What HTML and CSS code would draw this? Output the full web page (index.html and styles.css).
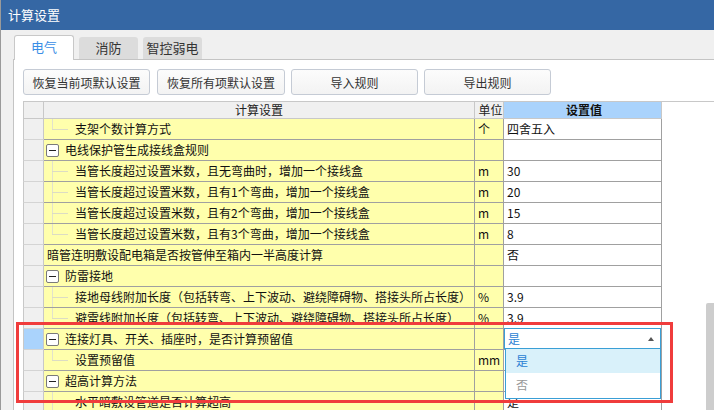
FILE: index.html
```html
<!DOCTYPE html>
<html lang="zh">
<head>
<meta charset="utf-8">
<title>计算设置</title>
<link rel="stylesheet" href="styles.css">
</head>
<body>
<div class="window">
  <div class="titlebar">计算设置</div>
  <div class="body">
    <div class="tabs">
      <div class="tab active">电气</div>
      <div class="tab">消防</div>
      <div class="tab">智控弱电</div>
    </div>
    <div class="panel">
      <div class="toolbar">
        <button class="btn w127">恢复当前项默认设置</button>
        <button class="btn w128">恢复所有项默认设置</button>
        <button class="btn w127">导入规则</button>
        <button class="btn w127">导出规则</button>
      </div>
      <div class="grid-wrap">
        <div class="grid">
          <div class="row head">
            <div class="c rh"></div>
            <div class="c name hc">计算设置</div>
            <div class="c unit hc">单位</div>
            <div class="c val hv">设置值</div>
          </div>

          <div class="row">
            <div class="c rh"></div>
            <div class="c name child last">支架个数计算方式</div>
            <div class="c unit">个</div>
            <div class="c val">四舍五入</div>
          </div>
          <div class="row">
            <div class="c rh"></div>
            <div class="c name parent"><span class="box"></span>电线保护管生成接线盒规则</div>
            <div class="c unit"></div>
            <div class="c val"></div>
          </div>
          <div class="row">
            <div class="c rh"></div>
            <div class="c name child">当管长度超过设置米数，且无弯曲时，增加一个接线盒</div>
            <div class="c unit">m</div>
            <div class="c val">30</div>
          </div>
          <div class="row">
            <div class="c rh"></div>
            <div class="c name child">当管长度超过设置米数，且有1个弯曲，增加一个接线盒</div>
            <div class="c unit">m</div>
            <div class="c val">20</div>
          </div>
          <div class="row">
            <div class="c rh"></div>
            <div class="c name child">当管长度超过设置米数，且有2个弯曲，增加一个接线盒</div>
            <div class="c unit">m</div>
            <div class="c val">15</div>
          </div>
          <div class="row">
            <div class="c rh"></div>
            <div class="c name child last">当管长度超过设置米数，且有3个弯曲，增加一个接线盒</div>
            <div class="c unit">m</div>
            <div class="c val">8</div>
          </div>
          <div class="row">
            <div class="c rh"></div>
            <div class="c name top">暗管连明敷设配电箱是否按管伸至箱内一半高度计算</div>
            <div class="c unit"></div>
            <div class="c val">否</div>
          </div>
          <div class="row">
            <div class="c rh"></div>
            <div class="c name parent"><span class="box"></span>防雷接地</div>
            <div class="c unit"></div>
            <div class="c val"></div>
          </div>
          <div class="row">
            <div class="c rh"></div>
            <div class="c name child">接地母线附加长度（包括转弯、上下波动、避绕障碍物、搭接头所占长度）</div>
            <div class="c unit">%</div>
            <div class="c val">3.9</div>
          </div>
          <div class="row">
            <div class="c rh"></div>
            <div class="c name child last">避雷线附加长度（包括转弯、上下波动、避绕障碍物、搭接头所占长度）</div>
            <div class="c unit">%</div>
            <div class="c val">3.9</div>
          </div>
          <div class="row">
            <div class="c rh sel"></div>
            <div class="c name parent"><span class="box"></span>连接灯具、开关、插座时，是否计算预留值</div>
            <div class="c unit"></div>
            <div class="c val edit">
              <div class="combo">
                <span class="combo-text">是</span>
                <span class="combo-arrow"></span>
              </div>
              <div class="droplist">
                <div class="opt hover">是</div>
                <div class="opt off">否</div>
              </div>
            </div>
          </div>
          <div class="row">
            <div class="c rh"></div>
            <div class="c name child last">设置预留值</div>
            <div class="c unit">mm</div>
            <div class="c val"></div>
          </div>
          <div class="row">
            <div class="c rh"></div>
            <div class="c name parent"><span class="box"></span>超高计算方法</div>
            <div class="c unit"></div>
            <div class="c val"></div>
          </div>
          <div class="row">
            <div class="c rh"></div>
            <div class="c name child">水平暗敷设管道是否计算超高</div>
            <div class="c unit"></div>
            <div class="c val">是</div>
          </div>
        </div>
      </div>
    </div>
  </div>
  <div class="scroll-thumb"></div>
  <div class="highlight"></div>
</div>
</body>
</html>
```

FILE: styles.css
```css
* { box-sizing: border-box; }
html, body {
  margin: 0;
  padding: 0;
  width: 714px;
  height: 410px;
  overflow: hidden;
}
body {
  font-family: "Noto Sans CJK SC", "Microsoft YaHei", sans-serif;
  font-size: 12px;
  color: #111;
  background: #f0f0f0;
}
.window {
  position: relative;
  width: 714px;
  height: 410px;
  overflow: hidden;
  border-left: 1px solid #9a9a9a;
}
.titlebar {
  height: 30px;
  background: #3567a4;
  color: #fff;
  font-size: 13px;
  line-height: 30px;
  padding-left: 7px;
}
.body {
  padding-top: 5px;
}
.tabs {
  display: flex;
  align-items: flex-end;
  gap: 5px;
  padding-left: 13px;
  height: 24px;
  position: relative;
  z-index: 2;
}
.tab {
  width: 59px;
  height: 22px;
  background: #dcdcdc;
  color: #333;
  font-size: 13px;
  line-height: 22px;
  text-align: center;
  border-radius: 3px 3px 0 0;
}
.tab.active {
  width: 60px;
  height: 25px;
  margin-bottom: -1px;
  background: #fff;
  color: #3a8ee6;
  border: 1px solid #c8c8c8;
  border-bottom: none;
  line-height: 22px;
}
.panel {
  margin-left: 12px;
  background: #fff;
  border-top: 1px solid #c4c4c4;
  border-left: 1px solid #c4c4c4;
  height: 360px;
  padding-left: 9px;
  padding-top: 9px;
}
.toolbar {
  display: flex;
  gap: 6px;
  height: 26px;
}
.btn {
  height: 26px;
  padding: 0;
  border: 1px solid #c5cbd5;
  border-radius: 3px;
  background: linear-gradient(#fcfcfc, #f3f3f3);
  font-family: inherit;
  font-size: 12px;
  color: #333;
}
.w127 { width: 127px; }
.w128 { width: 128px; }
.btn:nth-child(2) { margin-left: 1px; }
.grid-wrap {
  margin-top: 6px;
  border-top: 1px solid #c8c8c8;
}
.grid {
  display: flex;
  flex-direction: column;
  width: 639px;
}
.row {
  display: grid;
  grid-template-columns: 21px 431px 29px 158px;
  height: 21px;
}
.row.head { height: 17px; }
.c {
  border-right: 1px solid #a0a0a0;
  border-bottom: 1px solid #a0a0a0;
  height: 100%;
  line-height: 20px;
  white-space: nowrap;
  overflow: hidden;
  position: relative;
}
.head .c { line-height: 16px; background: #f0f0f0; border-color: #c8c8c8; }
.head .hc { text-align: center; color: #222; }
.head .hv {
  background: #aad3fc;
  text-align: center;
  font-weight: bold;
  color: #111;
  border-color: #c8c8c8;
}
.rh {
  background: #f0f0f0;
  border-left: 1px solid #c8c8c8;
  border-right-color: #c8c8c8;
  border-bottom-color: #d4d4d4;
}
.rh.sel { background: #aad3fc; }
.name, .unit { background: #ffffac; }
.unit { padding-left: 3px; }
.val { background: #fff; padding-left: 3px; overflow: visible; }
.top { padding-left: 3px; }
.parent {
  display: flex;
  align-items: center;
  padding-left: 2px;
}
.box {
  width: 13px;
  height: 13px;
  border: 1px solid #7a7a7a;
  border-radius: 2px;
  background: #fff;
  margin-right: 6px;
  position: relative;
  flex: none;
}
.box::after {
  content: "";
  position: absolute;
  left: 2px;
  right: 2px;
  top: 5px;
  height: 1px;
  background: #222;
}
.child { padding-left: 31px; }
.child::before {
  content: "";
  position: absolute;
  left: 8px;
  top: 0;
  height: 100%;
  border-left: 1px solid #e2e2cc;
}
.child.last::before { height: 10px; }
.child::after {
  content: "";
  position: absolute;
  left: 8px;
  top: 10px;
  width: 16px;
  border-top: 1px solid #dcdcc4;
}
.edit { padding: 0; z-index: 5; }
.combo {
  position: absolute;
  left: 0;
  top: -1px;
  width: 157px;
  height: 21px;
  border: 1px solid #3a9fd6;
  background: #fff;
  display: flex;
  align-items: center;
  padding-left: 3px;
  color: #2a7fd4;
}
.combo-arrow {
  position: absolute;
  right: 6px;
  top: 8px;
  width: 0;
  height: 0;
  border-left: 3px solid transparent;
  border-right: 3px solid transparent;
  border-bottom: 4px solid #555;
}
.droplist {
  position: absolute;
  left: 1px;
  top: 20px;
  width: 156px;
  height: 50px;
  border: 1px solid #3a9fd6;
  border-top: none;
  background: #fff;
}
.opt {
  height: 24px;
  line-height: 24px;
  padding-left: 10px;
  font-size: 12px;
}
.opt.hover { background: #d9f1fa; color: #2a7fd4; }
.opt.off { color: #999; }
.scroll-thumb {
  position: absolute;
  left: 705px;
  top: 303px;
  width: 9px;
  height: 120px;
  background: #cdcdcd;
  border-radius: 2px 0 0 0;
}
.highlight {
  position: absolute;
  left: 15px;
  top: 322px;
  width: 657px;
  height: 81px;
  border: 3px solid #f03c3c;
  z-index: 10;
  pointer-events: none;
}
```
